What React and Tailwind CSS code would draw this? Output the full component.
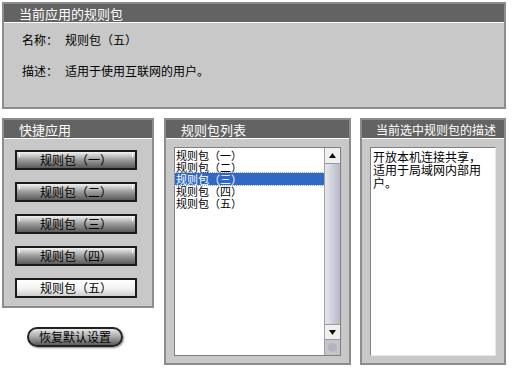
import React from 'react';

const font = { fontFamily: "'Noto Sans CJK SC', 'Noto Sans', sans-serif" };

const Panel = ({ title, className, titleClass = 'pl-[15px] text-[13px]', children }) => (
  <div className={`flex flex-col border-2 border-[#8c8c8c] bg-[#c8c8c8] ${className}`}>
    <div className={`h-[19px] bg-[#636363] text-white leading-[19px] whitespace-nowrap overflow-hidden border-b border-white ${titleClass}`}>
      {title}
    </div>
    {children}
  </div>
);

const rules = ['规则包（一）', '规则包（二）', '规则包（三）', '规则包（四）', '规则包（五）'];

export default function App() {
  const active = 4;
  const selected = 2;

  return (
    <div className="w-[512px] h-[384px] bg-white pt-[2px] pl-[2px] text-black" style={font}>
      {/* Current package */}
      <Panel title="当前应用的规则包" className="w-[504px] h-[107px]">
        <div className="flex flex-col gap-[17px] pl-[18px] pt-[10px] text-[12px] leading-[14px]">
          <div className="flex">
            <span className="w-[43px]">名称：</span>
            <span>规则包（五）</span>
          </div>
          <div className="flex">
            <span className="w-[43px]">描述：</span>
            <span>适用于使用互联网的用户。</span>
          </div>
        </div>
      </Panel>

      <div className="flex mt-[9px]">
        {/* Quick apply */}
        <div className="flex flex-col w-[152px]">
          <Panel title="快捷应用" className="h-[190px]">
            <div className="flex flex-col gap-[12px] pl-[11px] pt-[11px]">
              {rules.map((r, i) => (
                <div
                  key={r}
                  className={`relative w-[122px] h-[20px] border-2 border-[#1a1a1a] text-center text-[12px] leading-[16px] ${
                    i === active
                      ? 'bg-gradient-to-b from-white via-[#f4f4f4] to-[#cfcfcf]'
                      : 'bg-gradient-to-b from-[#f2f2f2] via-[#9a9a9a] to-[#5a5a5a]'
                  }`}
                >
                  {i !== active && (
                    <>
                      <span className="absolute left-[2px] top-[1px] w-[1px] h-[4px] bg-white" />
                      <span className="absolute right-[2px] top-[1px] w-[1px] h-[4px] bg-white" />
                    </>
                  )}
                  {r}
                </div>
              ))}
            </div>
          </Panel>
          <div className="pl-[25px] pt-[19px]">
            <div className="w-[96px] h-[20px] rounded-full border-2 border-[#222] bg-gradient-to-b from-[#e8e8e8] via-[#a8a8a8] to-[#5c5c5c] text-center text-[12px] leading-[16px] shadow-[1px_1px_2px_#888]">
              恢复默认设置
            </div>
          </div>
        </div>

        {/* Package list */}
        <Panel title="规则包列表" className="w-[187px] h-[247px] ml-[10px]">
          <div className="flex-1 px-[8px] pt-[8px] pb-[7px] flex">
            <div className="flex-1 flex bg-white border border-[#808080]">
              <div className="flex-1 flex flex-col pt-[1px] text-[11px] leading-[12px]">
                {rules.map((r, i) => (
                  <div
                    key={r}
                    className={`pl-[1px] h-[12px] ${i === selected ? 'bg-[#3168c4] text-white outline outline-1 outline-dotted outline-[#9ab]' : ''}`}
                  >
                    {r}
                  </div>
                ))}
              </div>
              <div className="w-[16px] flex flex-col border-l border-[#a0a0a0] bg-gradient-to-r from-[#e6e6ee] via-[#cfd0dc] to-[#b8b9c8]">
                <div className="h-[16px] bg-[#f0f0f0] border-b border-[#999] flex items-center justify-center">
                  <svg width="7" height="5" viewBox="0 0 7 5"><path d="M3.5 0L7 5H0Z" fill="#111" /></svg>
                </div>
                <div className="flex-1" />
                <div className="h-[16px] bg-[#f0f0f0] border-y border-[#999] flex items-center justify-center">
                  <svg width="7" height="5" viewBox="0 0 7 5"><path d="M0 0H7L3.5 5Z" fill="#111" /></svg>
                </div>
                <div className="h-[15px] bg-[#c4c4cc] flex items-center justify-center">
                  <div className="w-[9px] h-[9px] rounded-full bg-[#b4b4c0]" />
                </div>
              </div>
            </div>
          </div>
        </Panel>

        {/* Description */}
        <Panel title="当前选中规则包的描述" titleClass="pl-[14px] text-[12px]" className="w-[146px] h-[247px] ml-[9px]">
          <div className="flex-1 px-[8px] pt-[8px] pb-[7px] flex">
            <div className="flex-1 bg-white border border-[#808080] border-b-[#e8e8e8] border-r-[#e8e8e8] pl-[2px] pr-[10px] pt-[2px] text-[12px] leading-[13px] break-all">
              开放本机连接共享，适用于局域网内部用户。
            </div>
          </div>
        </Panel>
      </div>
    </div>
  );
}
